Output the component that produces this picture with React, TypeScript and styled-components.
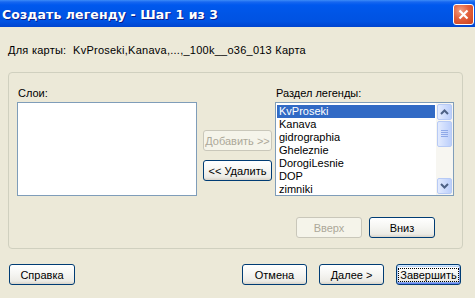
import { createGlobalStyle } from "styled-components";
import styled from "styled-components";

const GlobalStyle = createGlobalStyle`
  html, body {
    margin: 0;
    padding: 0;
    background: #ece9d8;
  }
`;

const Window = styled.div`
  width: 475px;
  height: 298px;
  background: #ece9d8;
  font-family: "Liberation Sans", Arial, sans-serif;
  font-size: 11px;
  color: #000;
  display: flex;
  flex-direction: column;
  overflow: hidden;
`;

const TitleBar = styled.div`
  height: 27px;
  flex: none;
  display: flex;
  align-items: center;
  justify-content: space-between;
  padding: 0 1px 0 2px;
  box-sizing: border-box;
  background: linear-gradient(
    180deg,
    #3d8cf7 0px,
    #1767f0 2px,
    #0058ee 5px,
    #0055e6 50%,
    #0052e2 80%,
    #0044cf 100%
  );
`;

const TitleText = styled.span`
  color: #fff;
  font-family: "DejaVu Sans", "Liberation Sans", sans-serif;
  font-weight: bold;
  font-size: 12.5px;
  letter-spacing: 0.1px;
  text-shadow: 1px 1px 0 #0a1e8a;
  margin-top: 1px;
`;

const CloseButton = styled.div`
  width: 21px;
  height: 21px;
  margin-top: 2px;
  box-sizing: border-box;
  border: 1px solid #fff;
  border-radius: 3px;
  background: radial-gradient(circle at 35% 30%, #f2a083 0%, #e3603c 45%, #c8401e 100%);
  display: flex;
  align-items: center;
  justify-content: center;
`;

const Body = styled.div`
  flex: 1;
  display: flex;
  flex-direction: column;
  padding: 17px 0 0 8px;
`;

const MapLine = styled.div`
  height: 13px;
  line-height: 13px;
  white-space: pre;
  letter-spacing: 0.25px;
`;

const GroupBox = styled.div`
  margin-top: 15px;
  width: 455px;
  height: 177px;
  box-sizing: border-box;
  border: 1px solid #d0d0bf;
  border-radius: 4px;
  padding: 14px 8px 0 8px;
  display: flex;
  flex-direction: column;
`;

const Columns = styled.div`
  display: flex;
  align-items: flex-start;
`;

const ListColumn = styled.div<{ $width: number; $gap?: number }>`
  width: ${(p) => p.$width}px;
  margin-left: ${(p) => p.$gap ?? 0}px;
  display: flex;
  flex-direction: column;
`;

const FieldLabel = styled.div`
  height: 13px;
  line-height: 13px;
  margin-bottom: 2px;
  padding-left: 1px;
`;

const ListBox = styled.div`
  height: 94px;
  box-sizing: border-box;
  border: 1px solid #7f9db9;
  background: #fff;
  display: flex;
  overflow: hidden;
`;

const Items = styled.div`
  flex: 1;
  padding: 1px 1px 0 1px;
  display: flex;
  flex-direction: column;
  overflow: hidden;
`;

const Item = styled.div<{ $selected?: boolean }>`
  height: 13px;
  line-height: 13px;
  flex: none;
  padding-left: 2px;
  margin-top: ${(p) => (p.$selected ? 1 : 0)}px;
  background: ${(p) => (p.$selected ? "#316ac5" : "transparent")};
  color: ${(p) => (p.$selected ? "#fff" : "#000")};
  white-space: nowrap;
`;

const ScrollBar = styled.div`
  width: 17px;
  flex: none;
  background: #f7f6f1;
  display: flex;
  flex-direction: column;
  padding: 0 1px 1px 0;
  box-sizing: border-box;
`;

const ScrollPart = styled.div<{ $height: number }>`
  height: ${(p) => p.$height}px;
  flex: none;
  margin: 1px 0 0 1px;
  box-sizing: border-box;
  border: 1px solid #b7caf5;
  border-radius: 2px;
  background: linear-gradient(90deg, #e3ebfe 0%, #cbdafc 60%, #bccffb 100%);
  display: flex;
  align-items: center;
  justify-content: center;
`;

const ScrollTrack = styled.div`
  flex: 1;
`;

const ButtonColumn = styled.div`
  width: 69px;
  margin-left: 6px;
  padding-top: 43px;
  display: flex;
  flex-direction: column;
  gap: 9px;
`;

const Button = styled.div<{ $width?: number; $disabled?: boolean; $default?: boolean }>`
  width: ${(p) => p.$width ?? 65}px;
  height: 21px;
  box-sizing: border-box;
  flex: none;
  border: 1px solid ${(p) => (p.$disabled ? "#c9c7ba" : "#003c74")};
  border-radius: 3px;
  background: ${(p) =>
    p.$disabled
      ? "#f5f4ea"
      : "linear-gradient(180deg, #ffffff 0%, #f6f6f3 45%, #ecebe5 85%, #d8d3c8 100%)"};
  box-shadow: ${(p) =>
    p.$default
      ? "inset 0 1px 0 #cee7ff, inset 0 -1px 0 #6982ee, inset 1px 0 0 #b8d2fa, inset -1px 0 0 #88a8f0, inset 0 2px 0 #bcd4f6, inset 0 -2px 0 #89adf0"
      : "none"};
  color: ${(p) => (p.$disabled ? "#aca899" : "#000")};
  display: flex;
  align-items: center;
  justify-content: center;
  white-space: nowrap;
`;

const FocusLabel = styled.span`
  outline: 1px dotted #000;
  outline-offset: 0px;
  padding: 0 1px;
  line-height: 12px;
`;

const OrderRow = styled.div`
  display: flex;
  justify-content: flex-end;
  gap: 7px;
  margin-top: 21px;
  padding-right: 19px;
`;

const FooterRow = styled.div`
  display: flex;
  align-items: center;
  gap: 12px;
  margin-top: 15px;
  padding: 0 14px 0 1px;
`;

const Spacer = styled.div`
  flex: 1;
`;

const Arrow = ({ up }: { up?: boolean }) => (
  <svg width="9" height="6" viewBox="0 0 9 6">
    <path
      d={up ? "M1 5 L4.5 1.5 L8 5" : "M1 1 L4.5 4.5 L8 1"}
      fill="none"
      stroke="#4d6185"
      strokeWidth="2"
    />
  </svg>
);

const Grip = () => (
  <svg width="7" height="8" viewBox="0 0 7 8">
    {[0, 2, 4, 6].map((y) => (
      <line key={y} x1="0" y1={y + 0.5} x2="7" y2={y + 0.5} stroke="#8fa9e8" strokeWidth="1" />
    ))}
  </svg>
);

const legendItems = ["KvProseki", "Kanava", "gidrographia", "Gheleznie", "DorogiLesnie", "DOP", "zimniki"];

export default function App() {
  return (
    <Window>
      <GlobalStyle />
      <TitleBar>
        <TitleText>Создать легенду - Шаг 1 из 3</TitleText>
        <CloseButton>
          <svg width="11" height="11" viewBox="0 0 11 11">
            <path d="M1.5 1.5 L9.5 9.5 M9.5 1.5 L1.5 9.5" stroke="#fff" strokeWidth="2.2" />
          </svg>
        </CloseButton>
      </TitleBar>
      <Body>
        <MapLine>{"Для карты:  KvProseki,Kanava,...,_100k__o36_013 Карта"}</MapLine>
        <GroupBox>
          <Columns>
            <ListColumn $width={180}>
              <FieldLabel>Слои:</FieldLabel>
              <ListBox />
            </ListColumn>
            <ButtonColumn>
              <Button $width={69} $disabled>
                Добавить &gt;&gt;
              </Button>
              <Button $width={69}>&lt;&lt; Удалить</Button>
            </ButtonColumn>
            <ListColumn $width={179} $gap={3}>
              <FieldLabel>Раздел легенды:</FieldLabel>
              <ListBox>
                <Items>
                  {legendItems.map((name, i) => (
                    <Item key={name} $selected={i === 0}>
                      {name}
                    </Item>
                  ))}
                </Items>
                <ScrollBar>
                  <ScrollPart $height={16}>
                    <Arrow up />
                  </ScrollPart>
                  <ScrollPart $height={26}>
                    <Grip />
                  </ScrollPart>
                  <ScrollTrack />
                  <ScrollPart $height={16}>
                    <Arrow />
                  </ScrollPart>
                </ScrollBar>
              </ListBox>
            </ListColumn>
          </Columns>
          <OrderRow>
            <Button $width={66} $disabled>
              Вверх
            </Button>
            <Button $width={66}>Вниз</Button>
          </OrderRow>
        </GroupBox>
        <FooterRow>
          <Button $width={66}>Справка</Button>
          <Spacer />
          <Button>Отмена</Button>
          <Button>Далее &gt;</Button>
          <Button $default>
            <FocusLabel>Завершить</FocusLabel>
          </Button>
        </FooterRow>
      </Body>
    </Window>
  );
}
